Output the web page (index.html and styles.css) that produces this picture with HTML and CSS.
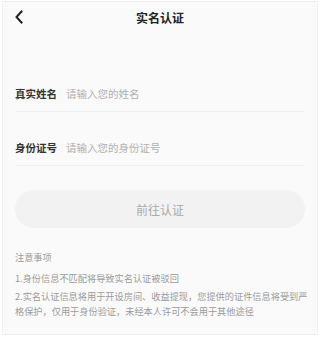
FILE: index.html
```html
<!DOCTYPE html>
<html lang="zh-CN">
<head>
    <meta charset="UTF-8">
    <meta name="viewport" content="width=device-width, initial-scale=1.0">
    <title>实名认证</title>
    <link rel="stylesheet" href="styles.css">
</head>
<body>
    <div class="page">
        <div class="nav-bar">
            <span class="back">
                <svg width="10" height="14" viewBox="0 0 10 14">
                    <path d="M6.5 1.5 L1.5 7 L6.5 12.5" fill="none" stroke="#222" stroke-width="2" stroke-linecap="square"/>
                </svg>
            </span>
            <h1>实名认证</h1>
        </div>

        <div class="form">
            <div class="form-row">
                <label>真实姓名</label>
                <input type="text" placeholder="请输入您的姓名">
            </div>
            <div class="form-row">
                <label>身份证号</label>
                <input type="text" placeholder="请输入您的身份证号">
            </div>
        </div>

        <button class="submit-btn">前往认证</button>

        <div class="notice">
            <p class="notice-title">注意事项</p>
            <p>1.身份信息不匹配将导致实名认证被驳回</p>
            <p>2.实名认证信息将用于开设房间、收益提现，您提供的证件信息将受到严格保护，仅用于身份验证，未经本人许可不会用于其他途径</p>
        </div>
    </div>
</body>
</html>
```

FILE: styles.css
```css
* {
    margin: 0;
    padding: 0;
    box-sizing: border-box;
    font-family: "Noto Sans CJK SC", "Noto Sans", sans-serif;
}

body {
    background: #fff;
    padding: 1px 2px 2px 2px;
}

.page {
    background: #fafafa;
    border: 1px solid #efefef;
    height: 334px;
    padding: 0 12px;
}

.nav-bar {
    position: relative;
    height: 30px;
    display: flex;
    align-items: center;
    justify-content: center;
}

.nav-bar h1 {
    font-size: 12px;
    font-weight: bold;
    color: #222;
}

.back {
    position: absolute;
    left: 0;
    top: 8px;
    display: flex;
}

.form {
    margin-top: 44px;
}

.form-row {
    display: flex;
    align-items: center;
    height: 36px;
    border-bottom: 1px solid #f0f0f0;
    margin-bottom: 18px;
}

.form-row:last-child {
    margin-bottom: 0;
}

.form-row label {
    width: 51px;
    font-size: 10.5px;
    font-weight: bold;
    color: #333;
}

.form-row input {
    flex: 1;
    border: none;
    outline: none;
    background: transparent;
    font-size: 10.5px;
    color: #333;
}

.form-row input::placeholder {
    color: #b0b0b0;
}

.submit-btn {
    display: block;
    width: 100%;
    height: 38px;
    margin-top: 24px;
    border: none;
    border-radius: 19px;
    background: #f2f2f2;
    color: #aaa;
    font-size: 12px;
}

.notice {
    margin-top: 22px;
    margin-right: -8px;
    color: #9a9a9a;
    font-size: 9.2px;
    line-height: 15px;
}

.notice p {
    margin-bottom: 3px;
}

.notice .notice-title {
    margin-bottom: 6px;
}
```
